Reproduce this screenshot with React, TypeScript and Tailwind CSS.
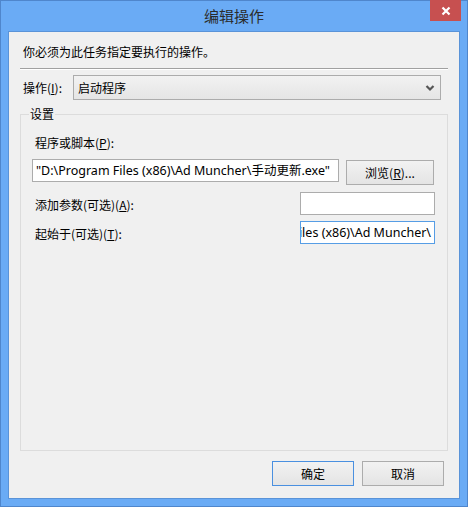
import React from "react";

const cjk = "font-['Noto_Sans_CJK_SC','Noto_Sans',sans-serif]";

function Btn({ children, focused }: { children: React.ReactNode; focused?: boolean }) {
  return (
    <div
      className={
        "flex h-[25px] w-[82px] items-center justify-center border bg-gradient-to-b from-[#f2f2f2] to-[#e4e4e4] text-[12px] leading-[16px] text-black " +
        (focused ? "border-[#4a90e0]" : "border-[#acacac]")
      }
    >
      {children}
    </div>
  );
}

export default function App() {
  return (
    <div className={"flex h-[507px] w-[468px] flex-col border border-[#4f86cc] bg-[#6aabf5] " + cjk}>
      {/* title bar */}
      <div className="relative flex h-[30px] shrink-0 items-center justify-center">
        <span className="pb-[1px] text-[15px] leading-[20px] text-[#2b2b2b]">编辑操作</span>
        <div className="absolute right-[6px] top-[-1px] flex h-[21px] w-[31px] items-center justify-center bg-[#c75050]">
          <svg width="10" height="10" viewBox="0 0 10 10">
            <path d="M1.5 1.5 L8.5 8.5 M8.5 1.5 L1.5 8.5" stroke="#fff" strokeWidth="2.2" />
          </svg>
        </div>
      </div>

      {/* client area */}
      <div className="ml-[7px] flex h-[468px] w-[452px] flex-col border border-[#5a93d8] bg-[#f0f0f0] pl-[11px] pr-[11px]">
        <p className="mt-[12px] pl-[3px] text-[12px] leading-[16px] text-black">你必须为此任务指定要执行的操作。</p>

        <div className="mt-[8px] h-[2px] border-t border-b border-t-[#a0a0a0] border-b-white" />

        <div className="mt-[5px] flex items-start">
          <span className="mt-[5px] w-[53px] pl-[3px] text-[12px] leading-[16px] text-black">
            操作(<u>I</u>):
          </span>
          <div className="flex h-[25px] w-[368px] items-center justify-between border border-[#acacac] bg-gradient-to-b from-[#f2f2f2] to-[#e5e5e5] pl-[4px] pr-[5px]">
            <span className="text-[12px] leading-[16px] text-black">启动程序</span>
            <svg width="10" height="8" viewBox="0 0 10 8">
              <path d="M1.5 2 L5 5.5 L8.5 2" fill="none" stroke="#555" strokeWidth="2.2" />
            </svg>
          </div>
        </div>

        <fieldset className="mt-[6px] h-[345px] border border-[#dcdcdc] pl-[11px] pr-[12px]">
          <legend className="ml-[-3px] px-[1px] text-[12px] leading-[16px] text-black">设置</legend>

          <div className="mt-[13px] pl-[3px] text-[12px] leading-[16px] text-black">
            程序或脚本(<u>P</u>):
          </div>

          <div className="mt-[8px] flex items-start gap-[7px]">
            <div className="flex h-[23px] w-[307px] items-center overflow-hidden whitespace-nowrap border border-[#acacac] bg-white pl-[3px] font-['Noto_Sans','Noto_Sans_CJK_SC',sans-serif] text-[12.5px] leading-[16px] text-black">
              "D:\Program Files (x86)\Ad Muncher\手动更新.exe"
            </div>
            <div className="mt-[1px]">
              <div className="flex h-[25px] w-[88px] items-center justify-center border border-[#acacac] bg-gradient-to-b from-[#f2f2f2] to-[#e4e4e4] text-[12px] leading-[16px] text-black">
                浏览(<u>R</u>)...
              </div>
            </div>
          </div>

          <div className="mt-[7px] flex items-start justify-between">
            <span className="mt-[5px] pl-[3px] text-[12px] leading-[16px] text-black">
              添加参数(可选)(<u>A</u>):
            </span>
            <div className="h-[23px] w-[135px] border border-[#acacac] bg-white" />
          </div>

          <div className="mt-[6px] flex items-start justify-between">
            <span className="mt-[5px] pl-[3px] text-[12px] leading-[16px] text-black">
              起始于(可选)(<u>T</u>):
            </span>
            <div className="flex h-[23px] w-[135px] items-center justify-end overflow-hidden whitespace-nowrap border border-[#569de5] bg-white font-['Noto_Sans','Noto_Sans_CJK_SC',sans-serif] text-[12.5px] leading-[16px] text-black">
              <span className="shrink-0 pr-[3px]">D:\Program Files (x86)\Ad Muncher\</span>
            </div>
          </div>
        </fieldset>

        <div className="mt-[10px] mr-[4px] flex justify-end gap-[8px]">
          <Btn focused>确定</Btn>
          <Btn>取消</Btn>
        </div>
      </div>
    </div>
  );
}
